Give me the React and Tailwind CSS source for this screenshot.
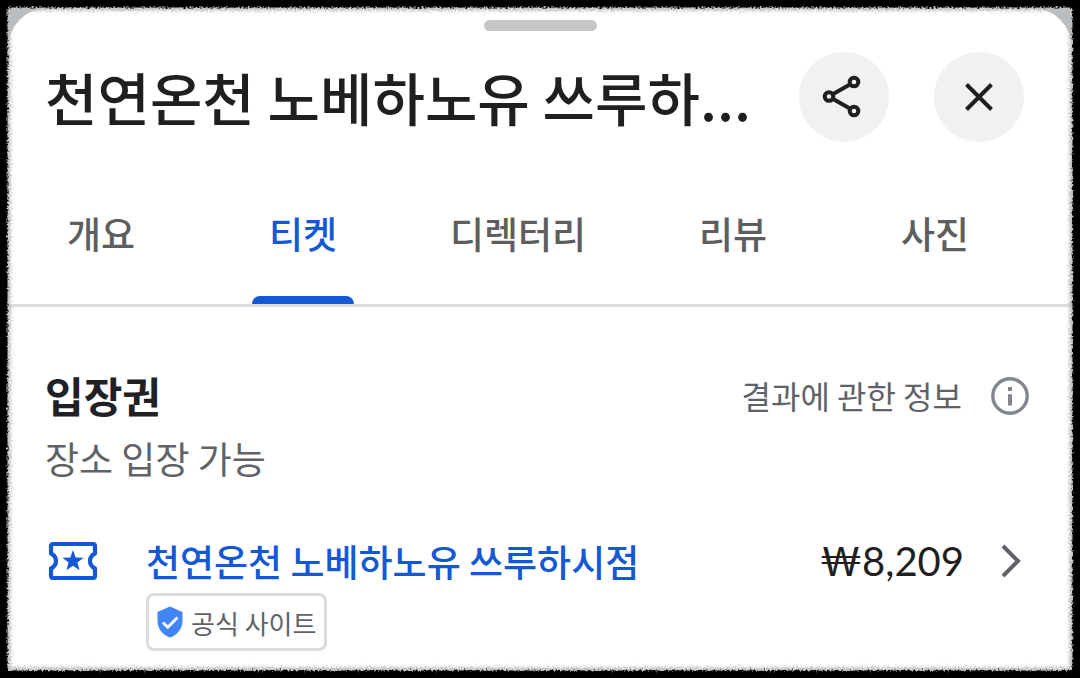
const tabs = [
    { label: '개요', width: 'w-[102px]' },
    { label: '티켓', width: 'w-[102px]', active: true },
    { label: '디렉터리', width: 'w-[128px]' },
    { label: '리뷰', width: 'w-[102px]' },
    { label: '사진', width: 'w-[102px]' },
];

const ShareIcon = () => (
    <svg viewBox="0 0 44 44" className="w-11 h-11" fill="none" stroke="currentColor" strokeWidth="4" aria-hidden="true">
        <circle cx="7" cy="21.5" r="4.3" />
        <circle cx="32" cy="7" r="4.3" />
        <circle cx="32" cy="36" r="4.3" />
        <path d="M10.7 19.3 28.3 9.200M10.7 23.7 28.3 33.8" />
    </svg>
);

const CloseIcon = () => (
    <svg viewBox="0 0 32 32" className="w-8 h-8" fill="none" stroke="currentColor" strokeWidth="4" aria-hidden="true">
        <path d="M3.5 3.5 28.5 28.5M28.5 3.5 3.5 28.5" />
    </svg>
);

const InfoIcon = () => (
    <svg viewBox="0 0 40 40" className="w-10 h-10" aria-hidden="true">
        <circle cx="20" cy="21" r="17.2" fill="none" stroke="#80868b" strokeWidth="3.4" />
        <path d="M18 19.200h4v11.300h-4zM18 12h4v4h-4z" fill="#80868b" />
    </svg>
);

const TicketIcon = () => (
    <svg viewBox="0 0 50 40" className="w-[50px] h-10" aria-hidden="true">
        <path
            d="M5 3h40a2 2 0 0 1 2 2v7.500c-3 1.500-5 4.300-5 7.500s2 6 5 7.500V35a2 2 0 0 1-2 2H5a2 2 0 0 1-2-2v-7.500c3-1.500 5-4.300 5-7.500s-2-6-5-7.500V5a2 2 0 0 1 2-2z"
            fill="none"
            stroke="#1558d6"
            strokeWidth="4.2"
            strokeLinejoin="round"
        />
        <path d="m25 9 2.700 7.400 7.900.3-6.200 4.900 2.200 7.600-6.600-4.400-6.600 4.400 2.200-7.600-6.200-4.900 7.900-.3z" fill="#1558d6" />
    </svg>
);

const ShieldIcon = () => (
    <svg viewBox="0 0 26 32" className="w-[26px] h-8" aria-hidden="true">
        <path d="M13 0.500 25.500 6v9c0 7.600-5.300 14.300-12.500 16.500C5.800 29.300.5 22.600.5 15V6z" fill="#4285f4" />
        <path d="m6 16.500 4.800 4.800L20.500 11.600" fill="none" stroke="#fff" strokeWidth="2.8" />
    </svg>
);

const ChevronIcon = () => (
    <svg viewBox="0 0 22 36" className="w-[22px] h-9" fill="none" stroke="#5f6368" strokeWidth="4" aria-hidden="true">
        <path d="M3 3 18 18 3 33" />
    </svg>
);

// Torn black border drawn over the edges of the sheet
const RoughFrame = () => (
    <svg className="absolute inset-0 w-full h-full pointer-events-none" aria-hidden="true">
        <defs>
            <filter id="fringe" x="0" y="0" width="100%" height="100%">
                <feGaussianBlur in="SourceGraphic" stdDeviation="1.5" result="soft" />
                <feTurbulence type="fractalNoise" baseFrequency="0.6" numOctaves="2" seed="4" result="noise" />
                <feDisplacementMap in="soft" in2="noise" scale="7" xChannelSelector="R" yChannelSelector="G" />
            </filter>
            <filter id="torn" x="0" y="0" width="100%" height="100%">
                <feTurbulence type="fractalNoise" baseFrequency="0.5" numOctaves="3" seed="9" result="noise" />
                <feDisplacementMap in="SourceGraphic" in2="noise" scale="6" xChannelSelector="R" yChannelSelector="G" result="edge" />
                <feGaussianBlur in="edge" stdDeviation="0.5" />
            </filter>
        </defs>
        <rect x="0" y="0" width="100%" height="100%" rx="12" fill="none" stroke="#bdbdbd" strokeWidth="21" filter="url(#fringe)" />
        <rect x="0" y="0" width="100%" height="100%" rx="10" fill="none" stroke="#000" strokeWidth="15" filter="url(#torn)" />
        <rect x="0" y="0" width="100%" height="100%" fill="none" stroke="#000" strokeWidth="11" />
    </svg>
);

const RoundButton = ({ label, children }) => (
    <button type="button" aria-label={label} className="flex items-center justify-center w-[90px] h-[90px] rounded-full bg-[#f1f1f1] shrink-0">
        {children}
    </button>
);

const App = () => {
    return (
        <div className="relative min-h-screen flex flex-col bg-[#b9bdc0] p-2 font-['Noto_Sans_CJK_KR',sans-serif] text-[#202124]">
            <main className="flex-1 bg-white rounded-t-[40px]">
                <div className="flex justify-center pt-3">
                    <div className="w-[113px] h-[11px] rounded-full bg-[#c6c6c6]" />
                </div>

                <header className="flex items-start pl-[37px] pr-12 pt-[21px] text-[#1f1f1f]">
                    <h1 className="flex-1 min-w-0 whitespace-nowrap text-[57px] leading-[88px] font-medium">천연온천 노베하노유 쓰루하...</h1>
                    <div className="flex gap-[45px]">
                        <RoundButton label="공유"><ShareIcon /></RoundButton>
                        <RoundButton label="닫기"><CloseIcon /></RoundButton>
                    </div>
                </header>

                <nav className="flex justify-between pl-[42px] pr-[86px] pt-14 border-b-3 border-[#dadce0]">
                    {tabs.map((tab) => (
                        <button
                            key={tab.label}
                            type="button"
                            className={`${tab.width} flex flex-col items-center text-[37px] leading-[70px] font-medium whitespace-nowrap ${tab.active ? 'text-[#1558d6]' : 'text-[#5e5e5e]'}`}
                        >
                            {tab.label}
                            <span className={`mt-7 w-full h-2 rounded-t-lg ${tab.active ? 'bg-[#1558d6]' : ''}`} />
                        </button>
                    ))}
                </nav>

                <section className="pl-[37px] pr-[42px] pt-[58px]">
                    <div className="flex items-center justify-between">
                        <h2 className="text-[42px] leading-[60px] font-bold">입장권</h2>
                        <button type="button" className="flex items-center gap-7 text-[32px] leading-[60px] text-[#5f6368]">
                            결과에 관한 정보
                            <InfoIcon />
                        </button>
                    </div>
                    <p className="text-[37px] leading-[66px] text-[#5f6368]">장소 입장 가능</p>

                    <div className="flex items-start pt-[38px]">
                        <div className="flex items-center w-[101px] h-16 pl-[3px]">
                            <TicketIcon />
                        </div>
                        <div className="flex-1">
                            <a href="#ticket" className="block text-[37px] leading-[64px] font-medium text-[#1558d6] whitespace-nowrap">
                                천연온천 노베하노유 쓰루하시점
                            </a>
                            <div className="inline-flex items-center gap-2 h-[58px] px-2 border-3 border-[#dadce0] rounded-lg text-[26px] text-[#5f6368]">
                                <ShieldIcon />
                                공식 사이트
                            </div>
                        </div>
                        <div className="flex items-center gap-9 h-16 pr-2">
                            <span className="font-['Lato','Noto_Sans_CJK_KR',sans-serif] text-[40px] text-[#1f1f1f]">₩8,209</span>
                            <ChevronIcon />
                        </div>
                    </div>
                </section>
            </main>
            <RoughFrame />
        </div>
    );
};

export default App;
